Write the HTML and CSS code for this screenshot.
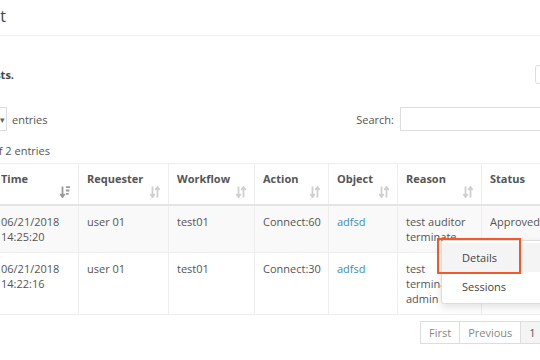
FILE: index.html
```html
<!DOCTYPE html>
<html lang="en">
<head>
    <meta charset="UTF-8">
    <meta name="viewport" content="width=device-width, initial-scale=1.0">
    <title>Request Audit</title>
    <link rel="stylesheet" href="styles.css">
</head>
<body>
    <div class="page-header">
        <h1 class="page-title">Request Audit</h1>
    </div>

    <div class="intro">
        <p class="intro-text">Review all access requests.</p>
        <button class="btn-export"></button>
    </div>

    <div class="toolbar">
        <div class="length">
            <span class="select-box"><span class="caret">&#9662;</span></span>
            <span>entries</span>
        </div>
        <label class="search">
            Search:
            <input type="text">
        </label>
    </div>

    <div class="info">Showing 1 to 2 of 2 entries</div>

    <div class="table-wrap">
        <table class="grid">
            <colgroup>
                <col style="width:86px">
                <col style="width:90px">
                <col style="width:86px">
                <col style="width:74px">
                <col style="width:69px">
                <col style="width:84px">
                <col style="width:80px">
                <col style="width:70px">
            </colgroup>
            <thead>
                <tr>
                    <th><div class="th-inner">Time<svg class="sort sort-active" viewBox="0 0 10 12"><path d="M2.5 0.5v10M0.3 8L2.5 11L4.7 8" fill="none" stroke="currentColor" stroke-width="1.8"/><path d="M6 1.2h4M6 4.5h3.4M6 7.8h2.6" stroke="currentColor" stroke-width="1.8"/></svg></div></th>
                    <th><div class="th-inner">Requester<svg class="sort" viewBox="0 0 10 12"><path d="M2.5 0.5v10M0.3 8L2.5 11L4.7 8M7.5 11.5V1.5M5.3 4L7.5 1L9.7 4" fill="none" stroke="currentColor" stroke-width="1.8"/></svg></div></th>
                    <th><div class="th-inner">Workflow<svg class="sort" viewBox="0 0 10 12"><path d="M2.5 0.5v10M0.3 8L2.5 11L4.7 8M7.5 11.5V1.5M5.3 4L7.5 1L9.7 4" fill="none" stroke="currentColor" stroke-width="1.8"/></svg></div></th>
                    <th><div class="th-inner">Action<svg class="sort" viewBox="0 0 10 12"><path d="M2.5 0.5v10M0.3 8L2.5 11L4.7 8M7.5 11.5V1.5M5.3 4L7.5 1L9.7 4" fill="none" stroke="currentColor" stroke-width="1.8"/></svg></div></th>
                    <th><div class="th-inner">Object<svg class="sort" viewBox="0 0 10 12"><path d="M2.5 0.5v10M0.3 8L2.5 11L4.7 8M7.5 11.5V1.5M5.3 4L7.5 1L9.7 4" fill="none" stroke="currentColor" stroke-width="1.8"/></svg></div></th>
                    <th><div class="th-inner">Reason<svg class="sort" viewBox="0 0 10 12"><path d="M2.5 0.5v10M0.3 8L2.5 11L4.7 8M7.5 11.5V1.5M5.3 4L7.5 1L9.7 4" fill="none" stroke="currentColor" stroke-width="1.8"/></svg></div></th>
                    <th><div class="th-inner">Status<svg class="sort" viewBox="0 0 10 12"><path d="M2.5 0.5v10M0.3 8L2.5 11L4.7 8M7.5 11.5V1.5M5.3 4L7.5 1L9.7 4" fill="none" stroke="currentColor" stroke-width="1.8"/></svg></div></th>
                    <th><div class="th-inner"></div></th>
                </tr>
            </thead>
            <tbody>
                <tr class="odd">
                    <td>06/21/2018 14:25:20</td>
                    <td>user 01</td>
                    <td>test01</td>
                    <td>Connect:60</td>
                    <td><a href="#">adfsd</a></td>
                    <td>test auditor terminate</td>
                    <td>Approved</td>
                    <td></td>
                </tr>
                <tr>
                    <td>06/21/2018 14:22:16</td>
                    <td>user 01</td>
                    <td>test01</td>
                    <td>Connect:30</td>
                    <td><a href="#">adfsd</a></td>
                    <td>test terminate admin</td>
                    <td></td>
                    <td></td>
                </tr>
            </tbody>
        </table>

        <ul class="dropdown">
            <li class="active">Details</li>
            <li>Sessions</li>
        </ul>
        <div class="mark"></div>
    </div>

    <div class="pager">
        <span class="page-btn">First</span>
        <span class="page-btn">Previous</span>
        <span class="page-btn current">1</span>
    </div>
</body>
</html>
```

FILE: styles.css
```css
body {
    margin: 0;
    font-family: "Open Sans", "Liberation Sans", sans-serif;
    font-size: 11px;
    color: #555;
    background: #fff;
    overflow: hidden;
}
.page-header {
    height: 35px;
    border-bottom: 1px solid #eee;
}
.page-title {
    margin: 0 0 0 -200px;
    width: 206px;
    text-align: right;
    white-space: nowrap;
    font-size: 16px;
    font-weight: normal;
    line-height: 20px;
    padding-top: 6px;
    color: #444;
}
.intro {
    display: flex;
    align-items: center;
    justify-content: space-between;
    margin-top: 29px;
    height: 18px;
}
.intro-text {
    margin: 0 0 0 -200px;
    width: 214px;
    text-align: right;
    white-space: nowrap;
    font-weight: bold;
    color: #444;
}
.btn-export {
    margin-right: -60px;
    width: 65px;
    height: 19px;
    border: 1px solid #ddd;
    border-radius: 3px;
    background: #fff;
}
.toolbar {
    display: flex;
    align-items: center;
    justify-content: space-between;
    margin-top: 24px;
    height: 24px;
}
.length {
    display: flex;
    align-items: center;
    gap: 5px;
}
.select-box {
    margin-left: -40px;
    width: 47px;
    height: 24px;
    border: 1px solid #ddd;
    display: flex;
    align-items: center;
    justify-content: flex-end;
    padding-right: 1px;
    box-sizing: border-box;
}
.caret {
    color: #666;
    font-size: 9px;
}
.search {
    display: flex;
    align-items: center;
    gap: 6px;
    margin-right: -60px;
}
.search input {
    width: 200px;
    height: 24px;
    box-sizing: border-box;
    border: 1px solid #ddd;
    padding: 4px 6px;
}
.info {
    margin: 12px 0 0 -200px;
    width: 250px;
    text-align: right;
    white-space: nowrap;
    line-height: 15px;
}
.table-wrap {
    position: relative;
    margin-top: 5px;
}
.grid {
    margin-left: -8px;
    border-collapse: collapse;
    table-layout: fixed;
    width: 639px;
    line-height: 15px;
}
.grid th, .grid td {
    border: 1px solid #eee;
    padding: 8px;
    text-align: left;
    vertical-align: top;
}
.grid th {
    border-bottom: 2px solid #e4e4e4;
    height: 27px;
    padding-top: 7px;
    padding-bottom: 6px;
    font-weight: bold;
    color: #555;
}
.th-inner {
    display: flex;
    flex-direction: column;
    justify-content: space-between;
    height: 27px;
}
.sort {
    align-self: flex-end;
    width: 10px;
    height: 12px;
    color: #d0d0d0;
}
.sort-active {
    color: #9a9a9a;
}
.grid tr.odd td {
    background: #f9f9f9;
}
.grid a {
    color: #3c8dbc;
    text-decoration: none;
}
.dropdown {
    position: absolute;
    left: 441px;
    top: 77px;
    width: 120px;
    margin: 0;
    padding: 2px 0;
    list-style: none;
    background: #fff;
    border: 1px solid #ddd;
    border-radius: 3px;
    box-shadow: 0 3px 8px rgba(0, 0, 0, 0.12);
}
.dropdown li {
    padding: 7px 20px;
    line-height: 15px;
    color: #444;
}
.dropdown li.active {
    background: #f4f4f4;
}
.mark {
    position: absolute;
    left: 437px;
    top: 75px;
    width: 80px;
    height: 32px;
    border: 2px solid #f05a28;
}
.pager {
    display: flex;
    margin: 6px 0 0 421px;
    line-height: 15px;
}
.page-btn {
    border: 1px solid #ddd;
    margin-left: -1px;
    padding: 3px 8px;
    color: #888;
    white-space: nowrap;
}
.page-btn.current {
    background: #f4f4f4;
    color: #555;
}
```
